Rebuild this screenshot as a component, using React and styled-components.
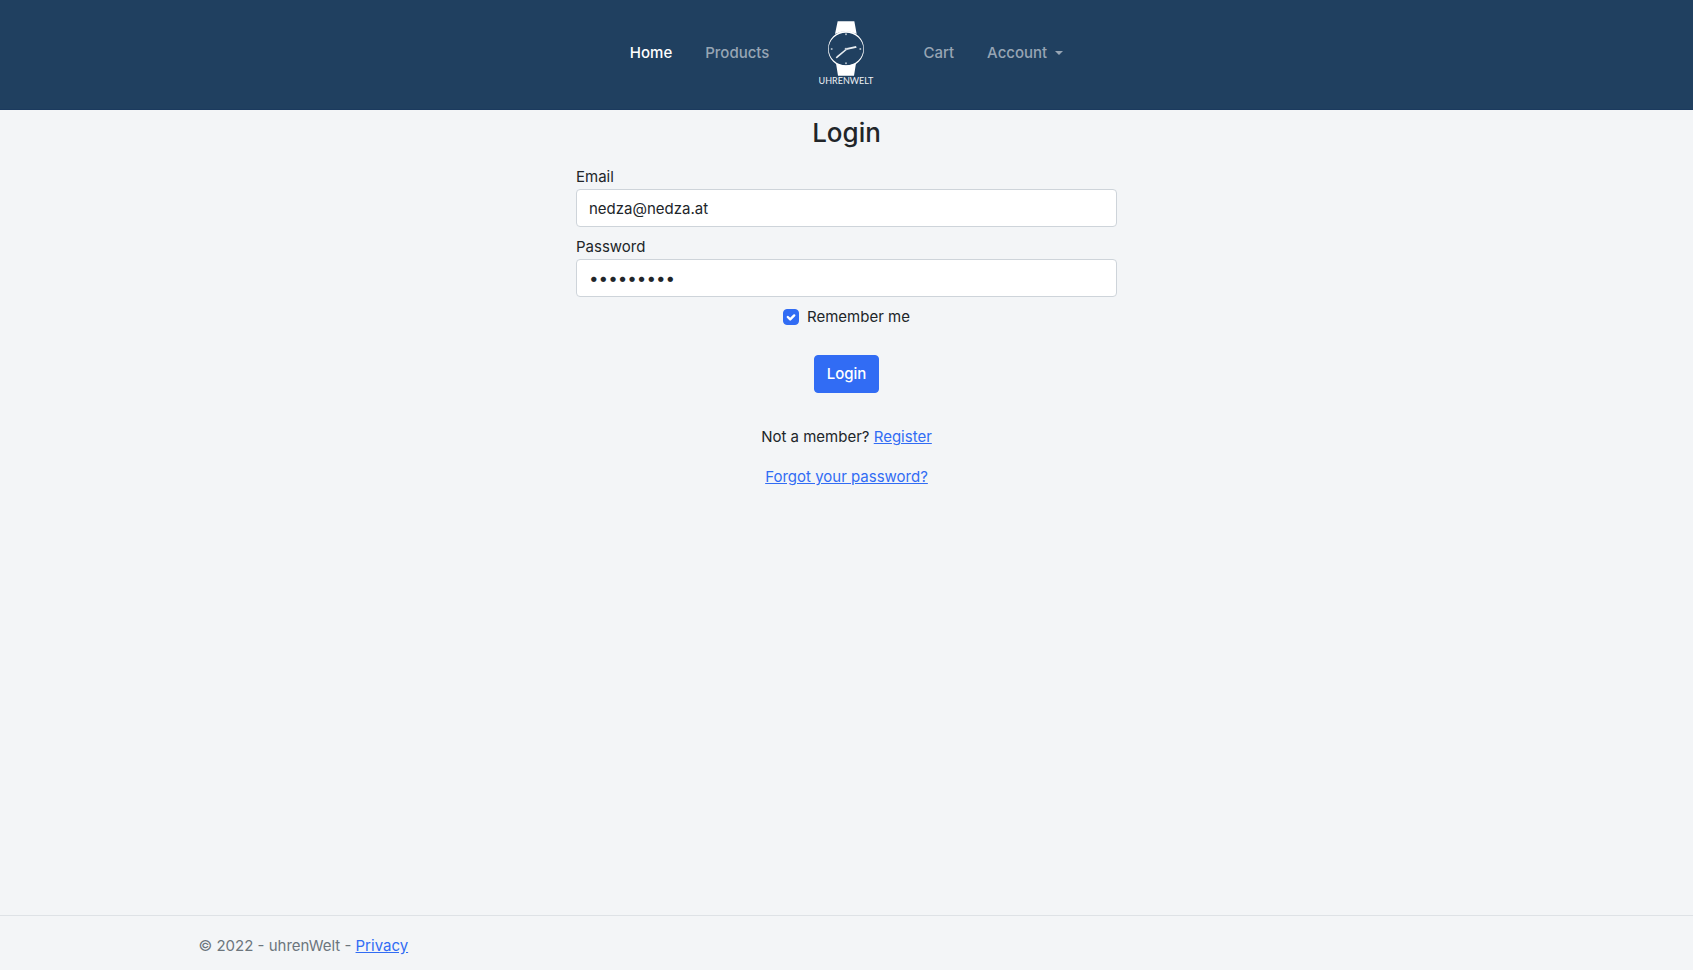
import React, { useState } from "react";
import styled, { createGlobalStyle } from "styled-components";

const GlobalStyle = createGlobalStyle`
  *, *::before, *::after { box-sizing: border-box; }
  body {
    margin: 0;
    background: #f3f5f7;
    color: #212529;
    font-family: Inter, "Liberation Sans", sans-serif;
    font-size: 15px;
    line-height: 24px;
  }
`;

const Page = styled.div`
  display: flex;
  flex-direction: column;
  min-height: 100vh;
`;

const Header = styled.header`
  background: #204060;
  border-bottom: 1px solid #1b3a5e;
  padding: 20px 16px 23px;
`;

const Nav = styled.nav`
  display: flex;
  flex-wrap: wrap;
  align-items: center;
  justify-content: center;
  gap: 33px;
  font-weight: 500;
`;

const NavLink = styled.a`
  color: ${(p) => (p.$active ? "#ffffff" : "#97a5b4")};
  text-decoration: none;
`;

const MenuButton = styled.button`
  display: flex;
  align-items: center;
  gap: 8px;
  padding: 0;
  border: 0;
  background: none;
  color: #97a5b4;
  font: inherit;
  cursor: pointer;

  &::after {
    content: "";
    border: 4px solid transparent;
    border-top-color: currentColor;
    border-bottom: 0;
  }
`;

const Brand = styled.a`
  display: flex;
  margin: 0 16px;
`;

const LogoText = styled.text`
  font-family: Lato, sans-serif;
  font-size: 27px;
  font-weight: 400;
  fill: #eef1f4;
`;

const Main = styled.main`
  flex: 1;
  display: flex;
  flex-direction: column;
  align-items: center;
  padding: 6px 16px 32px;
`;

const Title = styled.h1`
  margin: 0 0 15px;
  font-size: 26px;
  line-height: 34px;
  font-weight: 500;
`;

const Form = styled.form`
  display: flex;
  flex-direction: column;
  align-items: center;
  gap: 8px;
  width: 100%;
  max-width: 541px;
`;

const Field = styled.div`
  display: flex;
  flex-direction: column;
  width: 100%;
`;

const Input = styled.input`
  width: 100%;
  height: 38px;
  padding: 6px 12px;
  border: 1px solid #ced4da;
  border-radius: 4px;
  background: #ffffff;
  color: inherit;
  font: inherit;

  &[type="password"] { font-size: 17px; }
`;

const CheckLabel = styled.label`
  display: flex;
  align-items: center;
  gap: 8px;
`;

const CheckWrap = styled.span`
  display: grid;
  width: 16px;
  height: 16px;

  & > * { grid-area: 1 / 1; }
  & > svg { pointer-events: none; z-index: 1; }
`;

const Checkbox = styled.input`
  appearance: none;
  width: 16px;
  height: 16px;
  margin: 0;
  border: 1px solid #bfbfbf;
  border-radius: 4px;
  background: #ffffff;

  &:checked {
    border-color: #316cf4;
    background: #316cf4;
  }
`;

const SubmitButton = styled.button`
  height: 38px;
  margin-top: 18px;
  padding: 6px 12px;
  border: 1px solid #316cf4;
  border-radius: 4px;
  background: #316cf4;
  color: #ffffff;
  font: inherit;
  font-weight: 500;
  cursor: pointer;
`;

const Links = styled.div`
  display: flex;
  flex-direction: column;
  align-items: center;
  gap: 16px;
  margin-top: 32px;
`;

const Paragraph = styled.p`
  margin: 0;
`;

const Link = styled.a`
  color: #316cf4;
`;

const Footer = styled.footer`
  border-top: 1px solid #dee2e6;
  padding: 18px 0 12px;
  color: #6c757d;
`;

const Container = styled.div`
  max-width: 1320px;
  margin: 0 auto;
  padding: 0 12px;
`;

function Logo() {
  return (
    <svg width="56" height="66" viewBox="54 30 168 198" role="img" aria-label="uhrenWelt">
      <path fill="#fff" d="M113 34H163L170 72Q137 55 105 72Z" />
      <path fill="#fff" d="M108 160Q137 174 168 160L162 197H114Z" />
      <path
        fill="#fff"
        fillRule="evenodd"
        d="M84 117a54 54 0 1 1 108 0a54 54 0 1 1-108 0ZM86 117a52 49 0 1 0 104 0a52 49 0 1 0-104 0Z"
      />
      <path fill="#e8edf1" d="M137 115L168 108L170 113L139 120ZM137 117L140 120L111 145L107 144L110 139Z" />
      <circle cx="138" cy="117" r="4" fill="#c5ced7" />
      <g fill="#aebbc7">
        <circle cx="138" cy="73" r="3" />
        <circle cx="138" cy="160" r="3" />
        <circle cx="95" cy="117" r="3" />
        <circle cx="181" cy="117" r="3" />
      </g>
      <LogoText x="138" y="223" textAnchor="middle">UHRENWELT</LogoText>
    </svg>
  );
}

export default function App() {
  const [email, setEmail] = useState("nedza@nedza.at");
  const [password, setPassword] = useState("password1");
  const [remember, setRemember] = useState(true);

  return (
    <Page>
      <GlobalStyle />
      <Header>
        <Nav>
          <NavLink href="#home" $active>Home</NavLink>
          <NavLink href="#products">Products</NavLink>
          <Brand href="#home"><Logo /></Brand>
          <NavLink href="#cart">Cart</NavLink>
          <MenuButton type="button" aria-haspopup="menu">Account</MenuButton>
        </Nav>
      </Header>
      <Main>
        <Title>Login</Title>
        <Form onSubmit={(e) => e.preventDefault()}>
          <Field>
            <label htmlFor="email">Email</label>
            <Input id="email" type="email" value={email} onChange={(e) => setEmail(e.target.value)} />
          </Field>
          <Field>
            <label htmlFor="password">Password</label>
            <Input id="password" type="password" value={password} onChange={(e) => setPassword(e.target.value)} />
          </Field>
          <CheckLabel>
            <CheckWrap>
              <Checkbox type="checkbox" checked={remember} onChange={(e) => setRemember(e.target.checked)} />
              {remember && (
                <svg width="16" height="16" viewBox="0 0 20 20" fill="none" stroke="#fff" strokeWidth="3" strokeLinecap="round" strokeLinejoin="round">
                  <path d="M6 10l3 3l5-5" />
                </svg>
              )}
            </CheckWrap>
            Remember me
          </CheckLabel>
          <SubmitButton type="submit">Login</SubmitButton>
        </Form>
        <Links>
          <Paragraph>Not a member? <Link href="#register">Register</Link></Paragraph>
          <Link href="#forgot">Forgot your password?</Link>
        </Links>
      </Main>
      <Footer>
        <Container>© 2022 - uhrenWelt - <Link href="#privacy">Privacy</Link></Container>
      </Footer>
    </Page>
  );
}
